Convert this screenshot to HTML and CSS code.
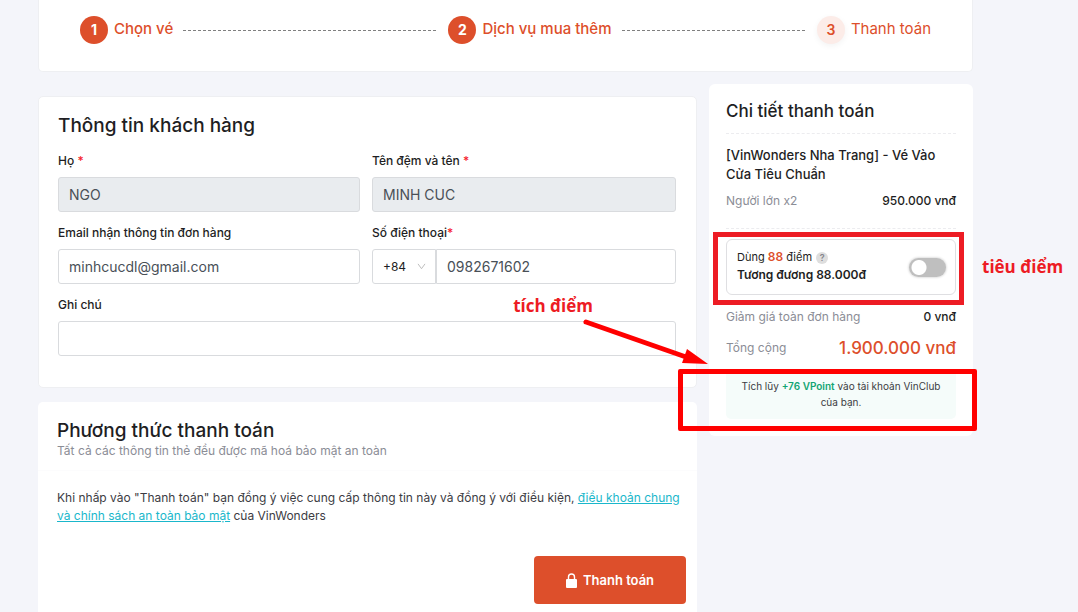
FILE: index.html
```html
<!DOCTYPE html>
<html lang="vi">
<head>
    <meta charset="UTF-8">
    <meta name="viewport" content="width=device-width, initial-scale=1.0">
    <title>Thanh toán</title>
    <link rel="stylesheet" href="styles.css">
</head>
<body>
    <div class="page">
        <ol class="steps">
            <li class="step">
                <span class="step-number">1</span>
                <span class="step-title">Chọn vé</span>
            </li>
            <li class="step">
                <span class="step-number">2</span>
                <span class="step-title">Dịch vụ mua thêm</span>
            </li>
            <li class="step step-last">
                <span class="step-number">3</span>
                <span class="step-title">Thanh toán</span>
            </li>
        </ol>

        <div class="columns">
            <main class="main-column">
                <section class="card customer-card">
                    <h2 class="card-title">Thông tin khách hàng</h2>
                    <form class="form-grid">
                        <div class="field">
                            <label for="lastName">Họ <span class="required">*</span></label>
                            <input class="text-input" id="lastName" type="text" value="NGO" disabled>
                        </div>
                        <div class="field">
                            <label for="firstName">Tên đệm và tên <span class="required">*</span></label>
                            <input class="text-input" id="firstName" type="text" value="MINH CUC" disabled>
                        </div>
                        <div class="field">
                            <label for="email">Email nhận thông tin đơn hàng</label>
                            <input class="text-input" id="email" type="email" value="minhcucdl@gmail.com">
                        </div>
                        <div class="field">
                            <label for="phone">Số điện thoại<span class="required">*</span></label>
                            <div class="phone-group">
                                <div class="code-wrapper">
                                    <select class="code-select" aria-label="Mã quốc gia">
                                        <option>+84</option>
                                    </select>
                                    <svg class="chevron" viewBox="0 0 10 8" aria-hidden="true"><path d="M1 1l4 5.5L9 1"/></svg>
                                </div>
                                <input class="text-input phone-input" id="phone" type="tel" value="0982671602">
                            </div>
                        </div>
                        <div class="field field-wide">
                            <label for="note">Ghi chú</label>
                            <input class="text-input" id="note" type="text">
                        </div>
                    </form>
                </section>

                <section class="payment-card">
                    <div class="payment-head">
                        <h2 class="card-title">Phương thức thanh toán</h2>
                        <p class="payment-hint">Tất cả các thông tin thẻ đều được mã hoá bảo mật an toàn</p>
                    </div>
                    <div class="payment-body">
                        <p class="terms">Khi nhấp vào "Thanh toán" bạn đồng ý việc cung cấp thông tin này và đồng ý với điều kiện, <a href="#">điều khoản chung và chính sách an toàn bảo mật</a> của VinWonders</p>
                        <button class="pay-button" type="button">
                            <svg class="lock" viewBox="0 0 11 15" aria-hidden="true">
                                <path class="lock-shackle" d="M2.5 7V4a3 3 0 0 1 6 0v3"/>
                                <rect x="0" y="6" width="11" height="9" rx="1"/>
                            </svg>
                            Thanh toán
                        </button>
                    </div>
                </section>
            </main>

            <aside class="summary">
                <h2 class="summary-title">Chi tiết thanh toán</h2>
                <div class="summary-item">
                    <h3 class="item-name">[VinWonders Nha Trang] - Vé Vào Cửa Tiêu Chuẩn</h3>
                    <div class="row">
                        <span class="row-label">Người lớn x2</span>
                        <span class="row-value">950.000 vnđ</span>
                    </div>
                </div>

                <div class="points">
                    <label class="points-text" for="usePoints">
                        <span class="points-line">Dùng <b>88</b> điểm <span class="help">?</span></span>
                        <span class="points-value">Tương đương 88.000đ</span>
                    </label>
                    <input class="switch" id="usePoints" type="checkbox">
                    <span class="mark-box mark-spend"></span>
                    <span class="mark-text mark-spend-text">tiêu điểm</span>
                </div>

                <div class="row">
                    <span class="row-label">Giảm giá toàn đơn hàng</span>
                    <span class="row-value">0 vnđ</span>
                </div>
                <div class="row row-total">
                    <span class="row-label">Tổng cộng</span>
                    <span class="total">1.900.000 vnđ</span>
                </div>

                <div class="reward">
                    Tích lũy <b>+76 VPoint</b> vào tài khoản VinClub của bạn.
                    <span class="mark-box mark-earn"></span>
                    <span class="mark-text mark-earn-text">tích điểm</span>
                    <svg class="mark-arrow" viewBox="0 0 130 55" aria-hidden="true">
                        <path class="arrow-line" d="M6 7L106 42"/>
                        <path class="arrow-head" d="M107 34L128 49L102 48Z"/>
                    </svg>
                </div>
            </aside>
        </div>
    </div>
</body>
</html>
```

FILE: styles.css
```css
* {
    box-sizing: border-box;
}

body {
    margin: 0;
    background: #f4f5fa;
    color: #1e1e23;
    font-family: Inter, "Open Sans", sans-serif;
    font-size: 12px;
    overflow-x: hidden;
}

h2, h3, p, ol {
    margin: 0;
    padding: 0;
    font-weight: 500;
}

.page {
    padding: 0 105px 0 38px;
}

/* Steps */
.steps {
    display: flex;
    list-style: none;
    padding: 16px 41px 27px;
    background: #fff;
    border: 1px solid #eeeff2;
    border-top: 0;
    border-radius: 0 0 5px 5px;
}

.step {
    display: flex;
    flex: 1;
    align-items: center;
    color: #dd4f2b;
}

.step::after {
    content: "";
    flex: 1;
    height: 1px;
    margin: 0 10px;
    background: repeating-linear-gradient(90deg, #808080 0 3px, transparent 3px 5px);
}

.step-last {
    flex: none;
}

.step-last::after {
    display: none;
}

.step-number {
    width: 28px;
    height: 28px;
    margin-right: 6px;
    border-radius: 50%;
    background: #dd4f2b;
    color: #fff;
    font-size: 14px;
    font-weight: 700;
    line-height: 28px;
    text-align: center;
}

.step-title {
    font-size: 15px;
    font-weight: 500;
    line-height: 20px;
    padding-bottom: 2px;
}

.step-last .step-number {
    background: #fcece8;
    color: #dd4f2b;
    font-weight: 600;
    box-shadow: 0 2px 6px rgba(0, 0, 0, 0.05);
}

.step-last .step-title {
    font-weight: 400;
}

/* Columns */
.columns {
    display: flex;
    align-items: flex-start;
    gap: 12px;
}

.main-column {
    flex: 1;
    min-width: 0;
    padding-top: 24px;
}

.card {
    padding: 17px 20px 31px 19px;
    background: #fff;
    border: 1px solid #eeeff2;
    border-radius: 5px;
}

.card-title {
    font-size: 19px;
    line-height: 24px;
}

/* Customer form */
.form-grid {
    display: grid;
    grid-template-columns: 1fr 1fr;
    gap: 11px 12px;
    margin-top: 13px;
}

.field-wide {
    grid-column: 1 / -1;
}

.field label {
    display: block;
    margin-bottom: 6px;
    font-size: 12px;
    font-weight: 500;
    line-height: 20px;
}

.required {
    color: #f5222d;
}

.text-input {
    display: block;
    width: 100%;
    height: 35px;
    padding: 0 10px;
    background: #fff;
    border: 1px solid #d9dbde;
    border-radius: 3px;
    color: #495057;
    font-family: inherit;
    font-size: 14px;
}

.text-input:disabled {
    background: #e9ecef;
}

.phone-group {
    display: flex;
}

.code-wrapper {
    position: relative;
    width: 64px;
}

.code-select {
    width: 100%;
    height: 35px;
    padding: 0 10px;
    appearance: none;
    background: #fff;
    border: 1px solid #d9dbde;
    border-radius: 3px 0 0 3px;
    color: #1e1e23;
    font-family: inherit;
    font-size: 12px;
}

.chevron {
    position: absolute;
    top: 14px;
    right: 10px;
    width: 9px;
    height: 7px;
    fill: none;
    stroke: #b5b5b5;
}

.phone-input {
    flex: 1;
    width: auto;
    min-width: 0;
    border-radius: 0 3px 3px 0;
}

/* Payment */
.payment-card {
    margin-top: 14px;
    background: #fff;
    border-radius: 5px 5px 0 0;
}

.payment-head {
    padding: 17px 19px 11px;
    border-bottom: 1px solid #fcfcfd;
}

.payment-hint {
    color: #8b8d96;
    font-size: 12px;
    font-weight: 400;
    line-height: 16px;
}

.payment-body {
    display: flex;
    flex-direction: column;
    padding: 18px 11px 8px 19px;
}

.terms {
    color: #3c3c43;
    font-size: 12px;
    font-weight: 400;
    line-height: 18px;
}

.terms a {
    color: #1ab7cb;
}

.pay-button {
    display: flex;
    align-items: center;
    justify-content: center;
    align-self: flex-end;
    gap: 6px;
    width: 152px;
    height: 48px;
    margin-top: 31px;
    background: #dd4f2b;
    border: 0;
    border-radius: 4px;
    color: #fff;
    font-family: inherit;
    font-size: 13px;
    font-weight: 600;
}

.lock {
    width: 11px;
    height: 15px;
    fill: #fff;
}

.lock-shackle {
    fill: none;
    stroke: #fff;
    stroke-width: 1.4;
}

/* Summary */
.summary {
    width: 264px;
    margin-top: 12px;
    padding: 17px;
    background: #fff;
    border-radius: 6px;
}

.summary-title {
    padding-bottom: 11px;
    border-bottom: 1px dashed #ececef;
    font-size: 17px;
    line-height: 21px;
}

.summary-item {
    padding: 12px 0 17px;
    border-bottom: 1px dashed #ececef;
}

.item-name {
    margin-bottom: 7px;
    font-size: 13px;
    line-height: 19px;
}

.row {
    display: flex;
    align-items: center;
    justify-content: space-between;
    line-height: 20px;
}

.row-label {
    color: #8b8d96;
    font-size: 12px;
}

.row-value {
    font-size: 12px;
    font-weight: 500;
}

.points {
    position: relative;
    display: flex;
    align-items: center;
    justify-content: space-between;
    height: 56px;
    margin: 10px 0 12px;
    padding: 0 9px 0 10px;
    border: 1px solid #dfdfe2;
    border-radius: 6px;
}

.points-text {
    padding-bottom: 3px;
}

.points-line,
.points-value {
    display: block;
    line-height: 17px;
}

.points-line {
    font-size: 11px;
}

.points-line b {
    color: #dd4f2b;
    font-size: 12px;
    font-weight: 600;
}

.points-value {
    font-size: 12px;
    font-weight: 600;
}

.help {
    display: inline-block;
    width: 12px;
    height: 12px;
    margin-left: 1px;
    border-radius: 50%;
    background: #dedede;
    color: #85858c;
    font-size: 9px;
    font-weight: 600;
    line-height: 12px;
    text-align: center;
}

.switch {
    width: 37px;
    height: 19px;
    margin: 0;
    appearance: none;
    border-radius: 10px;
    background: radial-gradient(circle at 10px 50%, #fff 7px, transparent 8px) #bfbfbf;
    box-shadow: 0 0 2px 1px #e2e2e2;
}

.row-total {
    margin: 9px 0;
    line-height: 24px;
}

.total {
    color: #dd4f2b;
    font-size: 17px;
    font-weight: 500;
}

.reward {
    position: relative;
    padding: 9px 12px;
    border-radius: 5px;
    background: #f5fcfa;
    color: #3c3c43;
    font-size: 10px;
    line-height: 16px;
    text-align: center;
}

.reward b {
    color: #12a573;
    font-weight: 600;
}

/* Red notes over the page */
.mark-box,
.mark-text,
.mark-arrow {
    position: absolute;
    pointer-events: none;
}

.mark-text {
    color: #ed1c24;
    font-family: "Open Sans", sans-serif;
    font-size: 17px;
    font-weight: 700;
    line-height: 24px;
    white-space: nowrap;
}

.mark-spend {
    top: -8px;
    right: -9px;
    bottom: -11px;
    left: -14px;
    border: 5px solid #ed1c24;
}

.mark-spend-text {
    top: 15px;
    left: 255px;
}

.mark-earn {
    top: 0;
    right: -21px;
    bottom: -12px;
    left: -48px;
    border: 5px solid #f00;
    border-radius: 2px;
}

.mark-earn-text {
    top: -75px;
    right: 363px;
}

.mark-arrow {
    top: -54px;
    left: -146px;
    width: 130px;
    height: 55px;
}

.arrow-line {
    stroke: #f00;
    stroke-width: 5;
    stroke-linecap: round;
}

.arrow-head {
    fill: #f00;
}
```
